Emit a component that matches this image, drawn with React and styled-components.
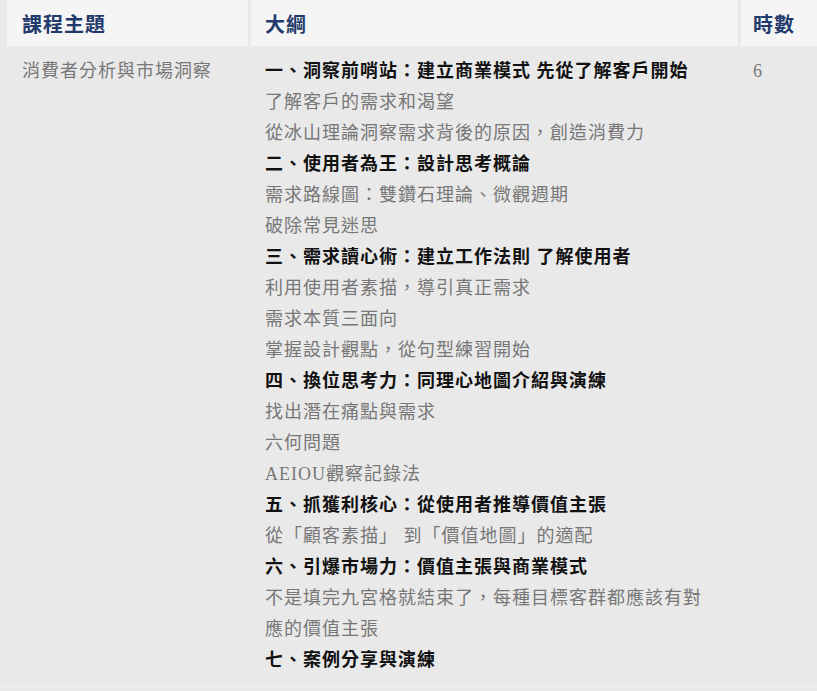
import React from "react";
import styled, { createGlobalStyle } from "styled-components";

const GlobalStyle = createGlobalStyle`
  body {
    margin: 0;
    background: #e9e9e9;
    font-family: "Liberation Serif", "Noto Sans CJK TC", serif;
  }
`;

const outline = [
  { text: "一、洞察前哨站：建立商業模式 先從了解客戶開始", bold: true },
  { text: "了解客戶的需求和渴望" },
  { text: "從冰山理論洞察需求背後的原因，創造消費力" },
  { text: "二、使用者為王：設計思考概論", bold: true },
  { text: "需求路線圖：雙鑽石理論、微觀週期" },
  { text: "破除常見迷思" },
  { text: "三、需求讀心術：建立工作法則 了解使用者", bold: true },
  { text: "利用使用者素描，導引真正需求" },
  { text: "需求本質三面向" },
  { text: "掌握設計觀點，從句型練習開始" },
  { text: "四、換位思考力：同理心地圖介紹與演練", bold: true },
  { text: "找出潛在痛點與需求" },
  { text: "六何問題" },
  { text: "AEIOU觀察記錄法" },
  { text: "五、抓獲利核心：從使用者推導價值主張", bold: true },
  { text: "從「顧客素描」 到「價值地圖」的適配" },
  { text: "六、引爆市場力：價值主張與商業模式", bold: true },
  { text: "不是填完九宮格就結束了，每種目標客群都應該有對應的價值主張" },
  { text: "七、案例分享與演練", bold: true },
];

export default function App() {
  return (
    <>
      <GlobalStyle />
      <Table>
        <HeadCell pad="15px">課程主題</HeadCell>
        <HeadCell pad="14px">大綱</HeadCell>
        <HeadCell pad="12px">時數</HeadCell>

        <BodyCell pad="15px">消費者分析與市場洞察</BodyCell>
        <BodyCell pad="14px">
          <Outline>
            {outline.map((item, i) => (
              <Line key={i} $bold={item.bold}>
                {item.text}
              </Line>
            ))}
          </Outline>
        </BodyCell>
        <BodyCell pad="12px">6</BodyCell>
      </Table>
    </>
  );
}

const Table = styled.div`
  display: grid;
  grid-template-columns: 241px 487px 1fr;
  column-gap: 3px;
  padding-left: 7px;
  border-bottom: 1px solid #f2f2f2;
`;

const HeadCell = styled.div`
  background: #f5f5f5;
  height: 46px;
  display: flex;
  align-items: center;
  padding-left: ${(p) => p.pad};
  font-family: "Noto Sans CJK TC", sans-serif;
  font-weight: 700;
  font-size: 20px;
  letter-spacing: 1px;
  color: #1f3a6b;
`;

const BodyCell = styled.div`
  padding: 10px 0 10px ${(p) => p.pad};
  font-size: 18px;
  letter-spacing: 1px;
  line-height: 31px;
  color: #777;
`;

const Outline = styled.div`
  display: flex;
  flex-direction: column;
  max-width: 450px;
`;

const Line = styled.div`
  line-height: 31px;
  color: ${(p) => (p.$bold ? "#111" : "#777")};
  font-weight: ${(p) => (p.$bold ? 700 : 400)};
  white-space: ${(p) => (p.$bold ? "nowrap" : "normal")};
`;
